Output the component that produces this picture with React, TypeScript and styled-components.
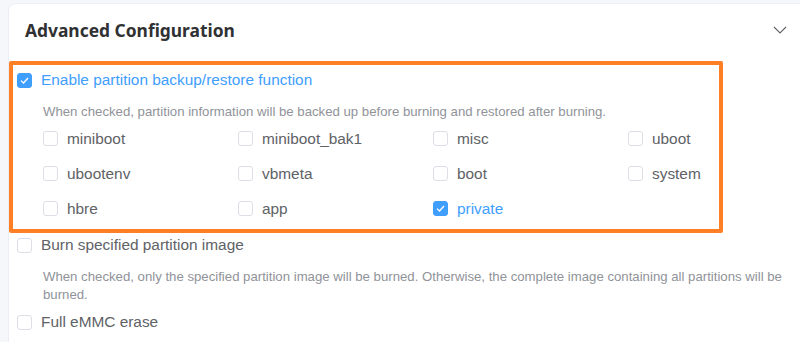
import styled, { createGlobalStyle } from 'styled-components';

const GlobalStyle = createGlobalStyle`
  html, body {
    margin: 0;
    padding: 0;
    background: #f5f7fa;
    overflow: hidden;
  }
  body {
    font-family: 'Liberation Sans', Arial, sans-serif;
  }
`;

// card runs on past the right and bottom edges of the window
const SCard = styled.div`
  margin: 3px 0 0 8px;
  width: 800px;
  height: 339px;
  background: #ffffff;
  border: 1px solid #ebeef5;
  border-bottom: none;
  border-radius: 8px 8px 0 0;
  box-sizing: border-box;
`;

const SHeader = styled.div`
  height: 51px;
  display: flex;
  align-items: center;
  justify-content: space-between;
  padding: 0 20px 0 16px;
  h2 {
    margin: 0;
    font-family: 'Noto Sans', 'Liberation Sans', sans-serif;
    font-size: 17.4px;
    font-weight: 700;
    color: #303133;
  }
`;

const SBody = styled.div`
  padding: 6px 8px 0 8px;
`;

// orange annotation frame around the backup section
const SHighlight = styled.div`
  margin-left: -8px;
  width: 714px;
  box-sizing: border-box;
  border: 4px solid #ff7f27;
  border-radius: 2px;
  padding: 0 0 3px 4px;
`;

const SRow = styled.label<{ $h: number }>`
  display: flex;
  align-items: center;
  height: ${(p) => p.$h}px;
  gap: 9px;
  cursor: pointer;
`;

const SBox = styled.span<{ $on?: boolean }>`
  width: 15px;
  height: 15px;
  box-sizing: border-box;
  border-radius: 3px;
  border: 1px solid ${(p) => (p.$on ? '#409eff' : '#dcdfe6')};
  background: ${(p) => (p.$on ? '#409eff' : '#ffffff')};
  display: flex;
  align-items: center;
  justify-content: center;
  flex-shrink: 0;
`;

const SLabel = styled.span<{ $on?: boolean }>`
  font-size: 15.4px;
  color: ${(p) => (p.$on ? '#409eff' : '#606266')};
  white-space: nowrap;
`;

const SDesc = styled.p<{ $top: number }>`
  margin: ${(p) => p.$top}px 0 0 26px;
  font-size: 13.2px;
  line-height: 18px;
  color: #909399;
  max-width: 752px;
`;

const SGrid = styled.div`
  margin-left: 26px;
  display: grid;
  grid-template-columns: repeat(4, 195px);
  grid-auto-rows: 35px;
`;

const SSpacer = styled.div<{ $h: number }>`
  height: ${(p) => p.$h}px;
`;

function Check({ on }: { on?: boolean }) {
  return (
    <SBox $on={on}>
      {on && (
        <svg width="9" height="7" viewBox="0 0 9 7">
          <path d="M1 3.6 L3.5 6 L8 1" fill="none" stroke="#fff" strokeWidth="1.3" />
        </svg>
      )}
    </SBox>
  );
}

function Option({ text, on, h = 35 }: { text: string; on?: boolean; h?: number }) {
  return (
    <SRow $h={h}>
      <Check on={on} />
      <SLabel $on={on}>{text}</SLabel>
    </SRow>
  );
}

const partitions = [
  'miniboot', 'miniboot_bak1', 'misc', 'uboot',
  'ubootenv', 'vbmeta', 'boot', 'system',
  'hbre', 'app', 'private',
];

export default function App() {
  return (
    <>
      <GlobalStyle />
      <SCard>
        <SHeader>
          <h2>Advanced Configuration</h2>
          <svg width="14" height="8" viewBox="0 0 14 8">
            <path d="M1 1 L7 7 L13 1" fill="none" stroke="#606266" strokeWidth="1.1" />
          </svg>
        </SHeader>
        <SBody>
          <SHighlight>
            <Option text="Enable partition backup/restore function" on h={30} />
            <SDesc $top={8}>
              When checked, partition information will be backed up before burning and restored after burning.
            </SDesc>
            <SGrid>
              {partitions.map((p) => (
                <Option key={p} text={p} on={p === 'private'} />
              ))}
            </SGrid>
          </SHighlight>
          <Option text="Burn specified partition image" h={24} />
          <SDesc $top={11}>
            When checked, only the specified partition image will be burned. Otherwise, the complete image containing all partitions will be burned.
          </SDesc>
          <SSpacer $h={6} />
          <Option text="Full eMMC erase" h={24} />
        </SBody>
      </SCard>
    </>
  );
}
